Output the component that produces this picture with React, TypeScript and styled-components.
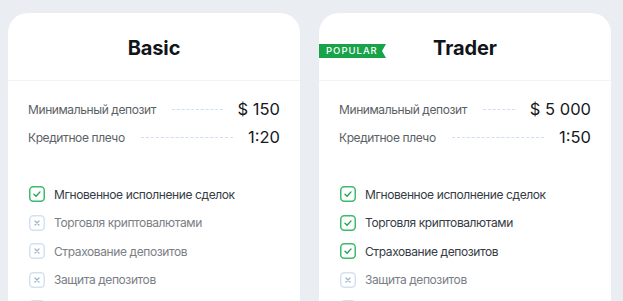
import React from "react";
import styled, { createGlobalStyle } from "styled-components";

const Global = createGlobalStyle`
  html, body { margin: 0; padding: 0; background: #eaeef3; overflow: hidden; }
  body { font-family: Inter, "Noto Sans", sans-serif; -webkit-font-smoothing: antialiased; }
`;

const Page = styled.div`
  display: grid;
  grid-template-columns: 292px 292px;
  column-gap: 19px;
  padding: 13px 0 0 8px;
  height: 288px;
  overflow: hidden;
`;

const Card = styled.div`
  background: #ffffff;
  border-radius: 20px;
  position: relative;
  padding-bottom: 40px;
`;

const Header = styled.div`
  height: 67px;
  display: flex;
  align-items: center;
  justify-content: center;
  border-bottom: 1px solid #f1f3f6;
  position: relative;
`;

const Title = styled.h2`
  margin: 0;
  font-size: 20px;
  font-weight: 700;
  color: #111418;
  letter-spacing: -0.1px;
  transform: translateY(1px);
`;

const Badge = styled.div`
  position: absolute;
  left: 0;
  top: 31px;
  width: 67px;
  height: 14px;
  background: #17a348;
  color: #ffffff;
  font-size: 9.5px;
  font-weight: 500;
  letter-spacing: 1px;
  line-height: 14px;
  padding-left: 7px;
  box-sizing: border-box;
  clip-path: polygon(0 0, 100% 0, calc(100% - 4px) 50%, 100% 100%, 0 100%);
`;

const Params = styled.div`
  padding: 14px 20px 0 20px;
`;

const ParamRow = styled.div`
  height: 28px;
  display: flex;
  align-items: center;
`;

const Label = styled.span`
  font-size: 12px;
  letter-spacing: -0.4px;
  color: #5b5f66;
  white-space: nowrap;
`;

const Dots = styled.span`
  flex: 1;
  height: 0;
  border-bottom: 1px dashed #cddff0;
  margin: 1px 15px 0 16px;
`;

const Value = styled.span`
  font-size: 16.5px;
  font-weight: 400;
  color: #16191d;
  white-space: nowrap;
`;

const Features = styled.ul`
  list-style: none;
  margin: 0;
  padding: 35px 20px 0 21px;
  display: flex;
  flex-direction: column;
  gap: 12.5px;
`;

const Feature = styled.li<{ $on: boolean }>`
  display: flex;
  align-items: center;
  gap: 9px;
  height: 16px;
  font-size: 12px;
  letter-spacing: -0.4px;
  color: ${(p) => (p.$on ? "#363b45" : "#7a7e85")};
  white-space: nowrap;
`;

const Box = ({ on }: { on: boolean }) =>
  on ? (
    <svg width="16" height="16" viewBox="0 0 16 16" fill="none">
      <rect x="0.75" y="0.75" width="14.5" height="14.5" rx="3.5" stroke="#3dbb6c" strokeWidth="1.5" />
      <path d="M5 8.2 L7.1 10.2 L11 5.9" stroke="#22a357" strokeWidth="1.4" strokeLinecap="round" strokeLinejoin="round" />
    </svg>
  ) : (
    <svg width="16" height="16" viewBox="0 0 16 16" fill="none">
      <rect x="0.75" y="0.75" width="14.5" height="14.5" rx="3.5" stroke="#d3e2f1" strokeWidth="1.5" />
      <path d="M6 6 L10 10 M10 6 L6 10" stroke="#9bb4d0" strokeWidth="1.2" strokeLinecap="round" />
    </svg>
  );

type Plan = {
  name: string;
  popular?: boolean;
  deposit: string;
  leverage: string;
  features: [string, boolean][];
};

const plans: Plan[] = [
  {
    name: "Basic",
    deposit: "$ 150",
    leverage: "1:20",
    features: [
      ["Мгновенное исполнение сделок", true],
      ["Торговля криптовалютами", false],
      ["Страхование депозитов", false],
      ["Защита депозитов", false],
      ["Персональный менеджер", false],
    ],
  },
  {
    name: "Trader",
    popular: true,
    deposit: "$ 5 000",
    leverage: "1:50",
    features: [
      ["Мгновенное исполнение сделок", true],
      ["Торговля криптовалютами", true],
      ["Страхование депозитов", true],
      ["Защита депозитов", false],
      ["Персональный менеджер", false],
    ],
  },
];

export default function App() {
  return (
    <>
      <Global />
      <Page>
        {plans.map((p) => (
          <Card key={p.name}>
            <Header>
              {p.popular && <Badge>POPULAR</Badge>}
              <Title>{p.name}</Title>
            </Header>
            <Params>
              <ParamRow>
                <Label>Минимальный депозит</Label>
                <Dots />
                <Value>{p.deposit}</Value>
              </ParamRow>
              <ParamRow>
                <Label>Кредитное плечо</Label>
                <Dots />
                <Value>{p.leverage}</Value>
              </ParamRow>
            </Params>
            <Features>
              {p.features.map(([t, on]) => (
                <Feature key={t} $on={on}>
                  <Box on={on} />
                  {t}
                </Feature>
              ))}
            </Features>
          </Card>
        ))}
      </Page>
    </>
  );
}
